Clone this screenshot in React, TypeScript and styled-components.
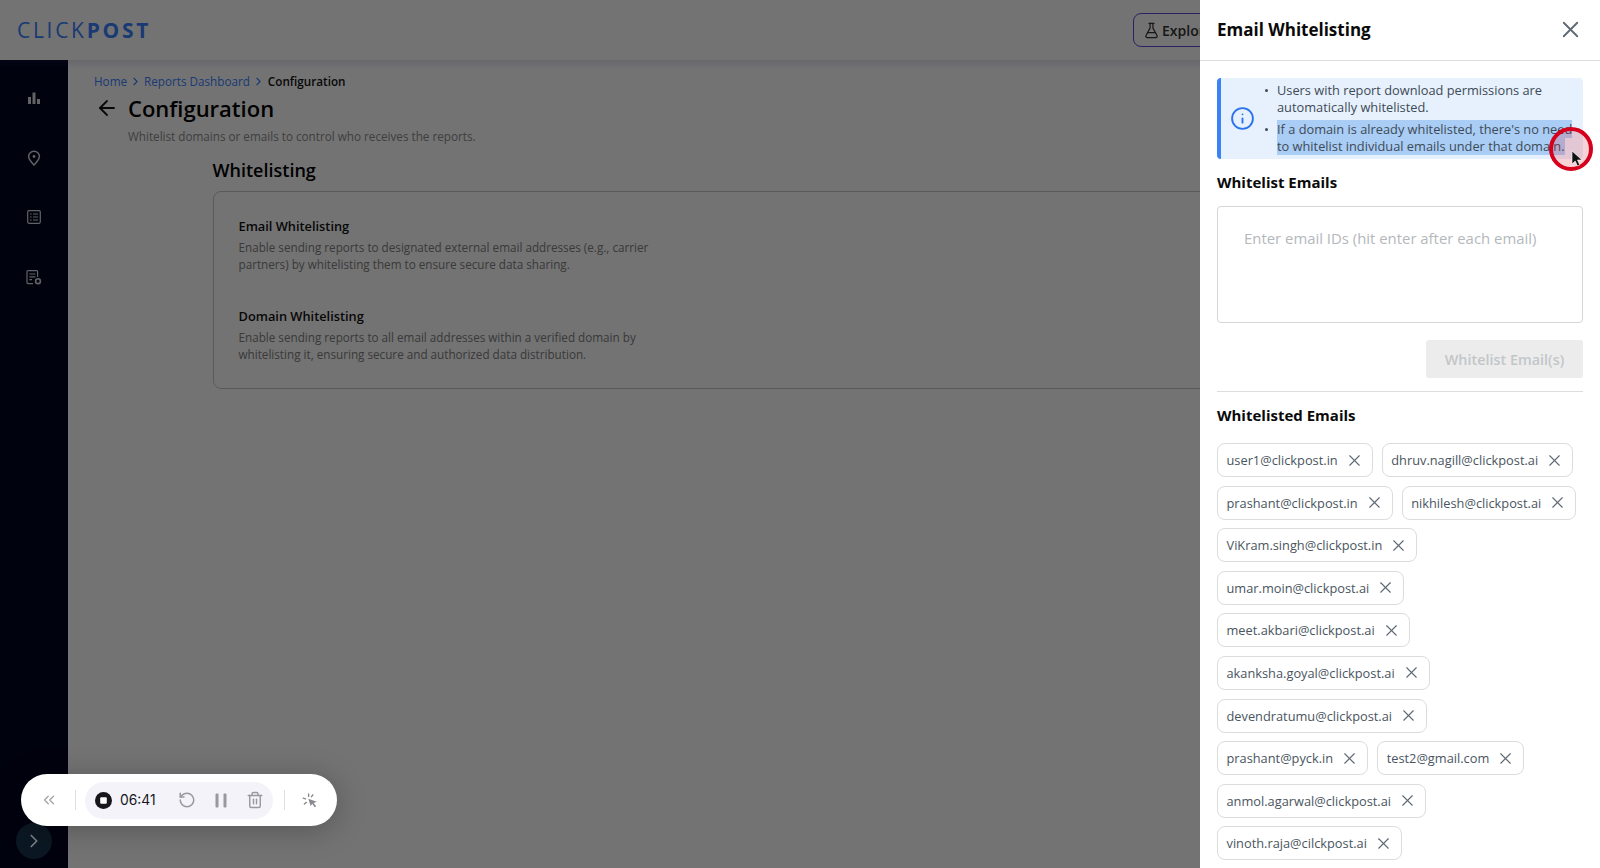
import React from 'react'
import styled, { createGlobalStyle } from 'styled-components'
import { ArrowLeft, ChevronRight, ChevronsLeft, FlaskConical, Info, RotateCcw, Trash2, X } from 'lucide-react'

const emailRows = [
  ['user1@clickpost.in', 'dhruv.nagill@clickpost.ai'],
  ['prashant@clickpost.in', 'nikhilesh@clickpost.ai'],
  ['ViKram.singh@clickpost.in'],
  ['umar.moin@clickpost.ai'],
  ['meet.akbari@clickpost.ai'],
  ['akanksha.goyal@clickpost.ai'],
  ['devendratumu@clickpost.ai'],
  ['prashant@pyck.in', 'test2@gmail.com'],
  ['anmol.agarwal@clickpost.ai'],
  ['vinoth.raja@cilckpost.ai'],
]

function BarsIcon() {
  return (
    <svg width="14" height="14" viewBox="0 0 14 14" fill="currentColor">
      <rect x="1" y="6" width="3" height="7" />
      <rect x="5.5" y="1.5" width="3" height="11.5" />
      <rect x="10" y="8" width="3" height="5" />
    </svg>
  )
}

function PinIcon() {
  return (
    <svg width="14" height="16" viewBox="0 0 14 16" fill="none" stroke="currentColor" strokeWidth="1.5">
      <path d="M7 15C4 12 1.6 9.6 1.6 6.6a5.4 5.4 0 0 1 10.8 0C12.4 9.6 10 12 7 15Z" />
      <circle cx="7" cy="6.5" r="1.4" fill="currentColor" stroke="none" />
    </svg>
  )
}

function TableIcon() {
  return (
    <svg width="14" height="14" viewBox="0 0 14 14" fill="none" stroke="currentColor" strokeWidth="1.2">
      <rect x="0.7" y="0.7" width="12.6" height="12.6" rx="1.2" />
      <path d="M3 4h1.6M6 4h5M3 7h1.6M6 7h5M3 10h1.6M6 10h5" />
    </svg>
  )
}

function ReportIcon() {
  return (
    <svg width="16" height="15" viewBox="0 0 16 15" fill="none" stroke="currentColor" strokeWidth="1.2">
      <path d="M7 13.6H2a1 1 0 0 1-1-1V1.6a1 1 0 0 1 1-1h8.6a1 1 0 0 1 1 1V7" />
      <path d="M3.4 4h6M3.4 6.8h6M3.4 9.6h2.6" />
      <circle cx="12" cy="11.2" r="2.4" strokeWidth="1.6" />
    </svg>
  )
}

function StopIcon() {
  return (
    <svg width="17" height="17" viewBox="0 0 17 17">
      <circle cx="8.5" cy="8.5" r="8.5" fill="#16161c" />
      <rect x="5.2" y="5.2" width="6.6" height="6.6" rx="1" fill="#fff" />
    </svg>
  )
}

function PauseBars() {
  return (
    <svg width="12" height="15" viewBox="0 0 12 15" fill="currentColor">
      <rect x="0.5" y="0.5" width="3" height="14" rx="1" />
      <rect x="8.5" y="0.5" width="3" height="14" rx="1" />
    </svg>
  )
}

function ClickIcon() {
  return (
    <svg width="16" height="15" viewBox="0 0 16 15" fill="none" stroke="#8a8a90" strokeWidth="1.4" strokeLinecap="round">
      <path d="M6.6 1v2.4M1.2 5.2l2.3.7M2.4 11l1.9-1.6M10.8 1.8 9.4 3.8" />
      <path d="M6.4 5.8l8.4 3-3.2 1.2 2.6 3.2-1.5 1-2.4-3.4L8.6 13Z" fill="#8a8a90" stroke="none" />
    </svg>
  )
}

function App() {
  return (
    <Page>
      <GlobalStyle />
      <TopBar>
        <Logo>
          CLICK<b>POST</b>
        </Logo>
        <ExploreButton>
          <FlaskConical size={17} strokeWidth={1.7} />
          Explore
        </ExploreButton>
      </TopBar>

      <Body>
        <Sidebar>
          <NavIcon><BarsIcon /></NavIcon>
          <NavIcon><PinIcon /></NavIcon>
          <NavIcon><TableIcon /></NavIcon>
          <NavIcon><ReportIcon /></NavIcon>
        </Sidebar>
        <Main>
          <Breadcrumbs>
            <a>Home</a>
            <ChevronRight size={13} color="#3a81ff" />
            <a>Reports Dashboard</a>
            <ChevronRight size={13} color="#3a81ff" />
            <span>Configuration</span>
          </Breadcrumbs>
          <TitleRow>
            <ArrowLeft size={24} strokeWidth={1.8} color="#111" />
            <h1>Configuration</h1>
          </TitleRow>
          <Subtitle>Whitelist domains or emails to control who receives the reports.</Subtitle>
          <Section>
            <h2>Whitelisting</h2>
            <Card>
              <CardItem>
                <h3>Email Whitelisting</h3>
                <p>Enable sending reports to designated external email addresses (e.g., carrier partners) by whitelisting them to ensure secure data sharing.</p>
              </CardItem>
              <CardItem>
                <h3>Domain Whitelisting</h3>
                <p>Enable sending reports to all email addresses within a verified domain by whitelisting it, ensuring secure and authorized data distribution.</p>
              </CardItem>
            </Card>
          </Section>
        </Main>
      </Body>

      <Overlay />

      <ExpandButton><ChevronRight size={22} strokeWidth={1.8} /></ExpandButton>

      <Recorder>
        <RecorderIcon $color="#a0a0a6"><ChevronsLeft size={18} strokeWidth={1.6} /></RecorderIcon>
        <Separator $left={17} $right={9} />
        <RecorderGroup>
          <StopIcon />
          <Timer>06:41</Timer>
          <RecorderIcon $ml={0}><RotateCcw size={18} strokeWidth={2} /></RecorderIcon>
          <RecorderIcon $ml={19}><PauseBars /></RecorderIcon>
          <RecorderIcon $ml={19}><Trash2 size={18} strokeWidth={1.9} /></RecorderIcon>
        </RecorderGroup>
        <Separator $left={11} $right={17} />
        <RecorderIcon><ClickIcon /></RecorderIcon>
      </Recorder>

      <Panel>
        <PanelHeader>
          <h2>Email Whitelisting</h2>
          <X size={27} strokeWidth={1.6} color="#5d6872" />
        </PanelHeader>
        <PanelBody>
          <InfoBox>
            <Info size={25} strokeWidth={1.8} color="#2b73ee" />
            <ul>
              <li>Users with report download permissions are automatically whitelisted.</li>
              <li>
                <mark>If a domain is already whitelisted, there's no need to whitelist individual emails under that domain.</mark>
              </li>
            </ul>
          </InfoBox>
          <FieldTitle>Whitelist Emails</FieldTitle>
          <EmailInput placeholder="Enter email IDs (hit enter after each email)" />
          <ButtonRow>
            <WhitelistButton disabled>Whitelist Email(s)</WhitelistButton>
          </ButtonRow>
          <Divider />
          <ListTitle>Whitelisted Emails</ListTitle>
          <ChipList>
            {emailRows.map((row) => (
              <ChipRow key={row[0]}>
                {row.map((email) => (
                  <Chip key={email}>
                    {email}
                    <X size={19} strokeWidth={1.35} color="#5d6872" />
                  </Chip>
                ))}
              </ChipRow>
            ))}
          </ChipList>
        </PanelBody>
        <CursorRing>
          <svg width="12" height="17" viewBox="0 0 12 17">
            <path d="M1 1v13l3.2-3 2.3 5 2.3-1-2.3-5H11Z" fill="#111" stroke="#fff" strokeWidth="0.6" />
          </svg>
        </CursorRing>
      </Panel>
    </Page>
  )
}

const GlobalStyle = createGlobalStyle`
  html, body {
    margin: 0;
    padding: 0;
    background: #fff;
  }
  * {
    box-sizing: border-box;
  }
  body {
    font-family: "Open Sans", "Liberation Sans", sans-serif;
  }
`

const Page = styled.div`
  position: relative;
  width: 1600px;
  height: 868px;
  overflow: hidden;
  display: flex;
  flex-direction: column;
  background: #fff;
`

const TopBar = styled.header`
  height: 60px;
  flex: none;
  display: flex;
  align-items: center;
  justify-content: space-between;
  padding: 0 357px 0 17px;
  background: #fff;
  position: relative;
  z-index: 1;
  box-shadow: 0 2px 8px rgba(60, 60, 160, 0.22);
`

const Logo = styled.div`
  font-size: 21px;
  letter-spacing: 2.7px;
  color: #3a81ff;
  font-weight: 400;

  b {
    font-weight: 700;
  }
`

const ExploreButton = styled.button`
  width: 110px;
  height: 34px;
  display: flex;
  align-items: center;
  gap: 2px;
  padding: 0 9px;
  border: 1.5px solid #5a4ce0;
  border-radius: 8px;
  background: #fff;
  font: 600 14px "Open Sans", sans-serif;
  color: #333;
`

const Body = styled.div`
  flex: 1;
  display: flex;
  min-height: 0;
`

const Sidebar = styled.nav`
  width: 68px;
  flex: none;
  background: #00051f;
  display: flex;
  flex-direction: column;
  align-items: center;
  gap: 41.7px;
  padding-top: 29px;
`

const NavIcon = styled.div`
  height: 18px;
  display: flex;
  align-items: center;
  justify-content: center;
  color: #d8dbe0;
`

const Main = styled.main`
  flex: 1;
  padding: 12px 0 0 26px;
`

const Breadcrumbs = styled.div`
  display: flex;
  align-items: center;
  gap: 2px;
  height: 18px;
  font-size: 11.7px;

  a {
    color: #3a81ff;
  }
  span {
    color: #111;
    font-weight: 600;
    margin-left: 1px;
  }
`

const TitleRow = styled.div`
  display: flex;
  align-items: center;
  gap: 9px;
  margin: 2px 0 0 1px;
  height: 32px;

  h1 {
    margin: 0;
    font-size: 22px;
    font-weight: 600;
    color: #000;
  }
`

const Subtitle = styled.p`
  margin: 4px 0 0 34px;
  font-size: 11.7px;
  line-height: 17px;
  color: #8c8c8c;
`

const Section = styled.section`
  margin: 12px 0 0 118.5px;

  h2 {
    margin: 0 0 8px;
    font-size: 18px;
    line-height: 26px;
    font-weight: 600;
    color: #000;
  }
`

const Card = styled.div`
  width: 1190px;
  height: 198px;
  padding: 24px 25px;
  border: 1px solid #c8c8c8;
  border-radius: 8px;
  display: flex;
  flex-direction: column;
  gap: 33px;
`

const CardItem = styled.div`
  width: 425px;

  h3 {
    margin: 0 0 3px;
    font-size: 12.8px;
    line-height: 20px;
    font-weight: 600;
    color: #111;
  }
  p {
    margin: 0;
    font-size: 11.7px;
    line-height: 17px;
    color: #808080;
  }
`

const Overlay = styled.div`
  position: absolute;
  inset: 0;
  z-index: 2;
  background: rgba(0, 0, 0, 0.55);
`

const ExpandButton = styled.div`
  position: absolute;
  left: 16px;
  top: 823px;
  z-index: 3;
  width: 36px;
  height: 36px;
  border-radius: 50%;
  display: flex;
  align-items: center;
  justify-content: center;
  background: #0b1722;
  color: #7d8388;
`

const Recorder = styled.div`
  position: absolute;
  left: 21px;
  top: 774px;
  z-index: 3;
  width: 316px;
  height: 52px;
  border-radius: 26px;
  background: #fff;
  display: flex;
  align-items: center;
  padding: 0 0 0 19px;
  box-shadow: 0 4px 30px rgba(0, 0, 0, 0.25);
`

const Separator = styled.div<{ $left: number; $right: number }>`
  width: 1px;
  height: 20px;
  background: #e0e0e4;
  margin: 0 ${(p) => p.$right}px 0 ${(p) => p.$left}px;
`

const RecorderGroup = styled.div`
  width: 188px;
  height: 37px;
  border-radius: 19px;
  background: #f3f3f9;
  display: flex;
  align-items: center;
  padding: 0 0 0 10px;
`

const RecorderIcon = styled.div<{ $color?: string; $ml?: number }>`
  display: flex;
  align-items: center;
  margin-left: ${(p) => p.$ml ?? 0}px;
  color: ${(p) => p.$color ?? '#98989e'};
`

const Timer = styled.span`
  margin-left: 8px;
  width: 58px;
  font: 400 13.8px Inter, sans-serif;
  color: #16161c;
`

const Panel = styled.aside`
  position: absolute;
  top: 0;
  right: 0;
  bottom: 0;
  width: 400px;
  z-index: 4;
  background: #fff;
  overflow: hidden;
`

const PanelHeader = styled.div`
  height: 61px;
  padding: 0 16px 1px 17px;
  display: flex;
  align-items: center;
  justify-content: space-between;
  border-bottom: 1px solid #dedede;

  h2 {
    margin: 0;
    font-size: 17px;
    font-weight: 700;
    color: #0a0a0a;
  }
`

const PanelBody = styled.div`
  padding: 17px 17px 0;
`

const InfoBox = styled.div`
  height: 81px;
  display: flex;
  align-items: center;
  padding-left: 9px;
  background: #e6f1fd;
  border-left: 4px solid #3b82f6;
  border-radius: 4px;

  ul {
    margin: 0 0 0 22px;
    padding: 0;
    list-style: none;
    font-size: 12.8px;
    line-height: 17px;
    color: #3e4a55;
    flex: 1;
  }
  li {
    position: relative;
    margin-bottom: 5px;
  }
  li::before {
    content: '';
    position: absolute;
    left: -12px;
    top: 7px;
    width: 3px;
    height: 3px;
    border-radius: 50%;
    background: #3e4a55;
  }
  li:last-child {
    margin-bottom: 0;
  }
  mark {
    background: #a9cdf5;
    color: #3e4a55;
  }
`

const FieldTitle = styled.h3`
  margin: 12px 0 13px;
  font-size: 15px;
  line-height: 22px;
  font-weight: 700;
  color: #0a0a0a;
`

const EmailInput = styled.textarea`
  display: block;
  width: 100%;
  height: 117px;
  padding: 21px 26px;
  resize: none;
  border: 1px solid #d6d6d6;
  border-radius: 4px;
  font: 400 14.9px "Open Sans", sans-serif;

  &::placeholder {
    color: #b4b8bc;
    opacity: 1;
  }
`

const ButtonRow = styled.div`
  display: flex;
  justify-content: flex-end;
  margin-top: 17px;
`

const WhitelistButton = styled.button`
  width: 157px;
  height: 38px;
  border: 0;
  border-radius: 3px;
  background: #ececec;
  color: #c3c6c9;
  font: 600 14.4px "Open Sans", sans-serif;
`

const Divider = styled.hr`
  margin: 13px 0 0;
  border: 0;
  border-top: 1px solid #dedede;
`

const ListTitle = styled.h3`
  margin: 12px 0 17px;
  font-size: 15px;
  line-height: 22px;
  font-weight: 700;
  color: #0a0a0a;
`

const ChipList = styled.div`
  display: flex;
  flex-direction: column;
  gap: 8.6px;
`

const ChipRow = styled.div`
  display: flex;
  gap: 9px;
`

const Chip = styled.div`
  height: 34px;
  display: flex;
  align-items: center;
  gap: 7px;
  padding: 0 8px 0 8.5px;
  border: 1px solid #dcdcdc;
  border-radius: 8px;
  font-size: 12.8px;
  color: #4a5560;
  white-space: nowrap;
`

const CursorRing = styled.div`
  position: absolute;
  left: 349px;
  top: 127px;
  width: 44px;
  height: 44px;
  border-radius: 50%;
  border: 4px solid #d6001c;
  background: rgba(220, 50, 70, 0.22);

  svg {
    position: absolute;
    left: 18px;
    top: 19px;
  }
`

export default App
